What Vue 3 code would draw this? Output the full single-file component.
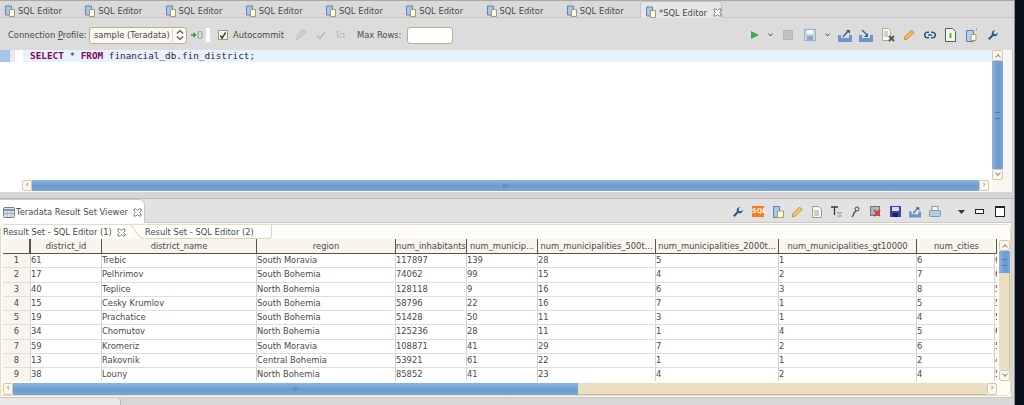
<script setup>
const tabs = Array.from({ length: 8 }, () => 'SQL Editor')
const columns = [
  { name: '', w: 28 },
  { name: 'district_id', w: 71 },
  { name: 'district_name', w: 155 },
  { name: 'region', w: 139 },
  { name: 'num_inhabitants', w: 71 },
  { name: 'num_municip...', w: 71 },
  { name: 'num_municipalities_500t...', w: 118 },
  { name: 'num_municipalities_2000t...', w: 123 },
  { name: 'num_municipalities_gt10000', w: 138 },
  { name: 'num_cities', w: 80 }
]
const rows = [
  [1, 61, 'Trebic', 'South Moravia', 117897, 139, 28, 5, 1, 6, '6'],
  [2, 17, 'Pelhrimov', 'South Bohemia', 74062, 99, 15, 4, 2, 7, '6'],
  [3, 40, 'Teplice', 'North Bohemia', 128118, 9, 16, 6, 3, 8, '5'],
  [4, 15, 'Cesky Krumlov', 'South Bohemia', 58796, 22, 16, 7, 1, 5, '5'],
  [5, 19, 'Prachatice', 'South Bohemia', 51428, 50, 11, 3, 1, 4, '5'],
  [6, 34, 'Chomutov', 'North Bohemia', 125236, 28, 11, 1, 4, 5, '6'],
  [7, 59, 'Kromeriz', 'South Moravia', 108871, 41, 29, 7, 2, 6, '5'],
  [8, 13, 'Rakovnik', 'Central Bohemia', 53921, 61, 22, 1, 1, 2, '4'],
  [9, 38, 'Louny', 'North Bohemia', 85852, 41, 23, 4, 2, 4, '5']
]
// The last visible data column leaves 2px for a sliver of the next, scrolled-off column.
const bodyWidth = (j) => (j === 9 ? 78 : columns[j].w) + 'px'
</script>

<template>
  <div class="screen">
    <div class="window">
      <div class="tabbar">
        <div v-for="(t, i) in tabs" :key="i" class="tab">
          <svg class="ic" viewBox="0 0 12 12"><path d="M1.500 1h6v9h-6z" fill="#a9c6e6" stroke="#5c86b4"/><path d="M5.500 4.500h5v7h-5z" fill="#fdfbe8" stroke="#a89a6a"/></svg>
          <span>{{ t }}</span>
        </div>
        <div class="tab active">
          <svg class="ic" viewBox="0 0 12 12"><path d="M1.500 1h6v9h-6z" fill="#a9c6e6" stroke="#5c86b4"/><path d="M5.500 4.500h5v7h-5z" fill="#fdfbe8" stroke="#a89a6a"/></svg>
          <span>*SQL Editor</span>
          <svg class="close" viewBox="0 0 9 9"><path d="M1 1h2l1.500 1.500L6 1h2v2L6.500 4.500 8 6v2H6L4.500 6.500 3 8H1V6l1.500-1.500L1 3z" fill="#fff" stroke="#666" stroke-width=".8"/></svg>
        </div>
      </div>

      <div class="toolbar">
        <label class="lbl first">Connection <u>P</u>rofile:</label>
        <div class="combo"><span>sample (Teradata)</span><i class="combo-sep"></i>
          <svg width="8" height="12" viewBox="0 0 8 12"><path d="M1 4.500 4 1.500 7 4.500M1 7.500 4 10.500 7 7.500" fill="none" stroke="#555" stroke-width="1.200"/></svg>
        </div>
        <svg class="plug" width="12" height="10" viewBox="0 0 12 10"><path d="M0 5h4" stroke="#4c8a4c" stroke-width="1.500"/><path d="M2.500 2v6l3-3z" fill="#3d8f3d"/><rect x="7" y="1.500" width="4" height="7" rx="1.500" fill="none" stroke="#8a9a8a"/></svg>
        <i class="white-sep"></i>
        <span class="check"><svg width="9" height="9" viewBox="0 0 9 9"><path d="M1.500 4.500 3.500 7.500 7.500 1" fill="none" stroke="#333" stroke-width="1.600"/></svg></span>
        <span class="lbl auto">Autocommit</span>
        <svg class="dis" width="14" height="14" viewBox="0 0 14 14"><path d="M2 12 4 6 9 1l3 3-5 5z" fill="#cfcfcf" stroke="#c4c4c4"/></svg>
        <svg class="dis chk" width="12" height="12" viewBox="0 0 12 12"><path d="M2 6.500 5 9.500 10 3" fill="none" stroke="#bdbdbd" stroke-width="1.800"/></svg>
        <svg class="dis und" width="10" height="10" viewBox="0 0 10 10"><path d="M3 1.500H1.500V7H8V3.500H4" fill="none" stroke="#bdbdbd" stroke-width="1.200"/></svg>
        <span class="lbl maxr">Max Rows:</span>
        <div class="txt"></div>

        <div class="tools">
          <svg class="t-play" width="10" height="10" viewBox="0 0 10 10"><path d="M1 1v8l8-4z" fill="#45a845"/></svg>
          <svg class="t-drop" width="5" height="4" viewBox="0 0 5 4"><path d="M.5 .5 2.500 3 4.500 .5" fill="none" stroke="#555"/></svg>
          <span class="t-stop"></span>
          <svg class="t-save" width="12" height="12" viewBox="0 0 12 12"><rect x=".5" y=".5" width="11" height="11" fill="#c5d3e6" stroke="#9db0c9"/><rect x="3" y="1" width="6" height="4" fill="#f3f6fa"/><rect x="3" y="7" width="6" height="4" fill="#8fa6c4"/></svg>
          <svg class="t-drop2" width="5" height="4" viewBox="0 0 5 4"><path d="M.5 .5 2.500 3 4.500 .5" fill="none" stroke="#555"/></svg>
          <svg class="t-ex" width="14" height="13" viewBox="0 0 14 13"><path d="M0 6h3v3h8V6h3v7H0z" fill="#6d97c8"/><path d="M5 8 10 2" stroke="#33629c" stroke-width="1.300"/><path d="M8 1h4v4z" fill="#33629c"/></svg>
          <svg class="t-im" width="14" height="13" viewBox="0 0 14 13"><path d="M0 6h3v3h8V6h3v7H0z" fill="#6d97c8"/><path d="M3 1 8 6" stroke="#33629c" stroke-width="1.300"/><path d="M5 8h4V4z" fill="#33629c"/></svg>
          <svg class="t-dx" width="13" height="14" viewBox="0 0 13 14"><path d="M.5 .5h6l2 2v10h-8z" fill="#fbf8ea" stroke="#b3a888"/><path d="M2 4h4M2 6h4M2 8h4" stroke="#8fa8c8"/><path d="M7 8 12 13M12 8 7 13" stroke="#555" stroke-width="2"/></svg>
          <svg class="t-pen" width="12" height="12" viewBox="0 0 12 12"><path d="M1 11 2 7.500 8.500 1 11 3.500 4.500 10z" fill="#f0b95a" stroke="#c98f3a"/></svg>
          <svg class="t-link" width="12" height="8" viewBox="0 0 12 8"><path d="M5 1.200H3.500a2.800 2.800 0 0 0 0 5.600H5M7 1.200h1.500a2.800 2.800 0 0 1 0 5.600H7M4 4h4" fill="none" stroke="#2c5d8f" stroke-width="1.600"/></svg>
          <svg class="t-doc" width="11" height="14" viewBox="0 0 11 14"><path d="M.5 .5h7l3 3v10H.5z" fill="#f3f8e8" stroke="#42685e"/><path d="M5.500 5v5" stroke="#6cae3c" stroke-width="2"/></svg>
          <svg class="t-doc2" width="13" height="14" viewBox="0 0 13 14"><path d="M.5 2.500h7v11h-7z" fill="#b9d0e8" stroke="#4e7fb0"/><path d="M5 6.500h5v6H5z" fill="#fdf9e6" stroke="#b09c5c"/><path d="M10.500 0v3" stroke="#d3a83c"/></svg>
          <svg class="t-wr" width="12" height="12" viewBox="0 0 12 12"><path d="M7.500 1.200a3.200 3.200 0 0 0-2.600 4.400L1 9.500 2.500 11l3.900-3.900a3.200 3.200 0 0 0 4.400-2.600L11 3.500 9.200 5.300 7 5 6.700 2.800 8.500 1z" fill="#2c5d8f"/></svg>
        </div>
      </div>

      <div class="editor">
        <div class="editor-main">
          <div class="ed-body">
            <div class="gutter"><i class="mark"></i></div>
            <div class="lav"></div>
            <div class="margin"></div>
            <div class="code-area">
              <div class="code-line"><b>SELECT</b> * <b>FROM</b> financial_db.fin_district;</div>
            </div>
          </div>
          <div class="ed-hbar-row">
            <div class="hbar">
              <span class="sb-btn">‹</span>
              <div class="sb-thumb full"><i class="grip">III</i></div>
              <span class="sb-btn">›</span>
            </div>
          </div>
        </div>
        <div class="vbar ed-vbar">
          <span class="vb-btn up"></span>
          <div class="vb-thumb"><i class="vgrip"></i></div>
          <span class="vb-btn down"></span>
        </div>
      </div>

      <div class="sash"></div>

      <div class="view">
        <div class="view-head">
          <div class="view-tab">
            <svg class="ic2" viewBox="0 0 12 11"><rect x=".5" y=".5" width="11" height="10" rx="1" fill="#dfe6ee" stroke="#6f7f90"/><path d="M.5 3h11" stroke="#6f7f90" stroke-width="1.600"/><path d="M4 3v7M8 3v7M1 6.500h10" stroke="#9fb0c2"/></svg>
            <span>Teradata Result Set Viewer</span>
            <svg class="close" viewBox="0 0 9 9"><path d="M1 1h2l1.500 1.500L6 1h2v2L6.500 4.500 8 6v2H6L4.500 6.500 3 8H1V6l1.500-1.500L1 3z" fill="#fff" stroke="#666" stroke-width=".8"/></svg>
          </div>
          <div class="view-tools">
            <svg class="v1" width="12" height="12" viewBox="0 0 12 12"><path d="M7.500 1.200a3.200 3.200 0 0 0-2.600 4.400L1 9.500 2.500 11l3.900-3.900a3.200 3.200 0 0 0 4.400-2.600L11 3.500 9.200 5.300 7 5 6.700 2.800 8.500 1z" fill="#2c5d8f"/></svg>
            <span class="sql">SQL</span>
            <svg class="v3" width="11" height="12" viewBox="0 0 11 12"><path d="M.5 .5h6v11h-6z" fill="#a9c6e6" stroke="#5c86b4"/><path d="M4.500 5h6v6.500h-6z" fill="#fdf9e6" stroke="#b09c5c"/></svg>
            <svg class="v4" width="12" height="12" viewBox="0 0 12 12"><path d="M1 11 2 7.500 8.500 1 11 3.500 4.500 10z" fill="#f0c66a" stroke="#c98f3a"/></svg>
            <svg class="v5" width="10" height="12" viewBox="0 0 10 12"><path d="M.5 .5h6l3 3v8h-9z" fill="#fbf8ea" stroke="#9c9c8a"/><path d="M2 5h5M2 7h5M2 9h5" stroke="#8fa8c8"/></svg>
            <svg class="v6" width="11" height="11" viewBox="0 0 11 11"><path d="M0 1h7M3.500 1v8" stroke="#2b3e50" stroke-width="1.300" fill="none"/><path d="M6 7h5M6 10h5" stroke="#7b8b9b"/></svg>
            <svg class="v7" width="9" height="12" viewBox="0 0 9 12"><circle cx="6" cy="3" r="2" fill="none" stroke="#445"/><path d="M5 5 2 8M3 8 1 11" stroke="#445" stroke-width="1.300"/></svg>
            <svg class="v8" width="11" height="11" viewBox="0 0 11 11"><rect x=".5" y=".5" width="9" height="9" fill="#aeb6c4" stroke="#6a7280"/><path d="M4 4 10 10M10 4 4 10" stroke="#d83a3a" stroke-width="1.800"/></svg>
            <svg class="v9" width="11" height="11" viewBox="0 0 11 11"><rect width="11" height="11" fill="#3b42a8"/><rect x="2" y="1" width="7" height="4" fill="#d9dcf5"/><rect x="3" y="7" width="5" height="4" fill="#1c2068"/></svg>
            <svg class="v10" width="12" height="12" viewBox="0 0 14 13"><path d="M0 6h3v3h8V6h3v7H0z" fill="#6d97c8"/><path d="M5 8 10 2" stroke="#33629c" stroke-width="1.300"/><path d="M8 1h4v4z" fill="#33629c"/></svg>
            <svg class="v11" width="12" height="11" viewBox="0 0 12 11"><rect x="3" y=".5" width="6" height="4" fill="#f4f6f8" stroke="#8a9bb0"/><rect x=".5" y="4.500" width="11" height="6" rx="1" fill="#b7cbe2" stroke="#7d96b3"/></svg>
            <svg class="v12" width="7" height="4" viewBox="0 0 7 4"><path d="M0 0h7L3.500 4z" fill="#333"/></svg>
            <span class="min"></span>
            <span class="max"></span>
          </div>
        </div>

        <div class="folder">
          <div class="inner-tabs">
            <div class="itab on">
              <span>Result Set - SQL Editor (1)</span>
              <svg class="close" viewBox="0 0 9 9"><path d="M1 1h2l1.500 1.500L6 1h2v2L6.500 4.500 8 6v2H6L4.500 6.500 3 8H1V6l1.500-1.500L1 3z" fill="#fff" stroke="#666" stroke-width=".8"/></svg>
            </div>
            <svg class="curve" width="15" height="14" viewBox="0 0 16 14" preserveAspectRatio="none"><path d="M0 0C5 1 6 12 15 13.500" fill="none" stroke="#d9c9a2"/></svg>
            <div class="itab off">Result Set - SQL Editor (2)</div>
          </div>

          <div class="grid-wrap">
            <div class="grid-col">
              <div class="grid">
                <div class="grow ghead">
                  <div v-for="(c, i) in columns" :key="i" class="hc" :style="{ width: c.w + 'px' }">{{ c.name }}</div>
                </div>
                <div v-for="r in rows" :key="r[0]" class="grow gbody">
                  <div v-for="(v, j) in r.slice(0, 10)" :key="j" class="bc" :class="{ idx: j === 0 }" :style="{ width: bodyWidth(j) }">{{ v }}</div>
                  <div class="bc rest">{{ r[10] }}</div>
                </div>
              </div>
              <div class="hbar tbl-bar">
                <span class="sb-btn">‹</span>
                <div class="sb-thumb part"><i class="grip">III</i></div>
                <div class="sb-track"></div>
                <span class="sb-btn">›</span>
              </div>
            </div>
            <div class="vbar tbl-vbar">
              <span class="vb-btn up"></span>
              <div class="vb-thumb short"><i class="vgrip"></i></div>
              <div class="vb-track"></div>
              <span class="vb-btn down"></span>
            </div>
          </div>
        </div>
      </div>

      <div class="footer"><i class="foot-tab"></i></div>
    </div>
  </div>
</template>

<style scoped>
.screen { width: 1024px; height: 405px; background: #0a0f1c; overflow: hidden; font: 8.35px/1 "DejaVu Sans", sans-serif; color: #4a4a4a; }
.window { width: 1015px; height: 405px; background: #dcdcdc; display: flex; flex-direction: column; border-right: 1px solid #8f8f8f; box-sizing: border-box; }

.tabbar { height: 18px; flex: none; display: flex; background: #d9d9d9; border-top: 1px solid #a8a8a8; box-sizing: border-box; border-bottom: 1px solid #c8c8c8; }
.tab { width: 80.25px; flex: none; display: flex; align-items: center; padding: 3px 0 0 4px; box-sizing: border-box; gap: 1px; white-space: nowrap; }
.tab span { margin: 2px 0 0 1px; }
.tab.active { width: 82px; margin-left: -2px; padding-left: 4px; background: #e6e6e6; border: 1px solid #c4c4c4; border-bottom: 0; border-radius: 4px 4px 0 0; height: 18px; }
.ic { width: 12px; height: 12px; flex: none; }
.close { width: 9px; height: 9px; flex: none; margin-left: 5px; }

.toolbar { height: 32px; flex: none; display: flex; align-items: center; background: #dcdcdc; padding-top: 2px; box-sizing: border-box; }
.lbl { white-space: nowrap; }
.first { margin-left: 8px; width: 81px; }
.combo { width: 98px; height: 17px; box-sizing: border-box; border: 1px solid #c0ae87; border-radius: 3px; background: #faf8f2; display: flex; align-items: center; padding-left: 4px; white-space: nowrap; }
.combo span { width: 78px; }
.combo-sep { width: 1px; height: 13px; background: #dcd5c4; margin: 0 3px 0 0; }
.plug { margin-left: 4px; }
.white-sep { width: 4px; height: 14px; background: #fff; margin-left: 3px; }
.check { border: 1px solid #a7966c; background: #fdfcf6; margin-left: 8px; display: flex; align-items: center; justify-content: center; width: 8px; height: 8px; }
.auto { margin-left: 5px; width: 52px; }
.dis { margin-left: 9px; }
.dis.chk { margin-left: 7px; }
.dis.und { margin-left: 9px; }
.maxr { margin-left: 11px; width: 50px; }
.txt { width: 46px; height: 17px; background: #fff; border: 1px solid #c0ae87; border-radius: 3px; box-sizing: border-box; }
.tools { display: flex; align-items: center; margin-left: 297px; }
.t-drop { margin-left: 8px; }
.t-stop { width: 10px; height: 10px; box-sizing: border-box; background: #c2c2c2; border: 1px solid #b5b5b5; border-radius: 1px; margin-left: 10px; }
.t-save { margin-left: 11px; }
.t-drop2 { margin-left: 9px; }
.t-ex { margin-left: 8px; }
.t-im { margin-left: 7px; }
.t-dx { margin-left: 9px; }
.t-pen { margin-left: 8px; }
.t-link { margin-left: 9px; }
.t-doc { margin-left: 9px; }
.t-doc2 { margin-left: 10px; }
.t-wr { margin-left: 8px; }

.editor { height: 142px; flex: none; display: flex; background: #f8f6f1; border-right: 1px solid #c8c8c8; margin-right: 1px; }
.editor-main { width: 992px; flex: none; display: flex; flex-direction: column; background: #fff; }
.ed-body { flex: 1; display: flex; }
.gutter { width: 10px; background: #fff; }
.mark { display: block; width: 10px; height: 12px; background: #a9c6e8; }
.lav { width: 5px; height: 12px; background: #efe2f2; }
.margin { width: 8px; }
.code-area { flex: 1; }
.code-line { height: 12px; background: #e8f2fe; padding-left: 7px; font: 9.35px/12px "DejaVu Sans Mono", monospace; color: #2a2a2a; white-space: pre; }
.code-line b { color: #7f0a55; font-weight: bold; }
.ed-hbar-row { padding: 0 3px 0 22px; height: 12px; flex: none; }

.hbar { display: flex; height: 11px; }
.sb-btn { width: 10px; height: 11px; box-sizing: border-box; border: 1px solid #d8c9a6; border-radius: 2px; background: #faf7ee; font-size: 8px; line-height: 8px; text-align: center; color: #777; flex: none; }
.sb-thumb { background: linear-gradient(#8db4de, #6c9bd0 55%, #7aa6d8); display: flex; align-items: center; justify-content: center; }
.sb-thumb.full { flex: 1; }
.sb-thumb.part { width: 565px; flex: none; }
.sb-track { flex: 1; background: #ebdfc3; border-bottom: 1px solid #cbbb92; }
.grip { font: normal 6px/1 "DejaVu Sans", sans-serif; color: #4d78aa; }

.vbar { width: 11px; flex: none; display: flex; flex-direction: column; }
.ed-vbar { height: 130px; }
.vb-btn { height: 11px; flex: none; box-sizing: border-box; border: 1px solid #d8c9a6; border-radius: 2px; background: #faf7ee; position: relative; }
.vb-btn::after { content: ""; position: absolute; left: 3px; width: 3px; height: 3px; border: solid #8c8c8c; border-width: 1px 0 0 1px; transform: rotate(45deg); top: 4px; }
.vb-btn.down::after { transform: rotate(225deg); top: 1px; }
.vb-thumb { flex: 1; background: linear-gradient(90deg, #8db4de, #6c9bd0 55%, #7aa6d8); display: flex; align-items: center; justify-content: center; }
.vb-thumb.short { flex: none; height: 22px; }
.vb-track { flex: 1; background: #ebdfc3; border-right: 1px solid #d3c49c; }
.vgrip { width: 5px; height: 5px; border-top: 1px solid #4d78aa; border-bottom: 1px solid #4d78aa; }

.sash { height: 7px; flex: none; background: #d6d6d6; border-bottom: 1px solid #b8b8b8; box-sizing: border-box; }

.view { height: 198px; flex: none; display: flex; flex-direction: column; background: #fcfaf5; margin-right: 2px; border-right: 1px solid #cfcfcf; }
.view-head { height: 24px; flex: none; display: flex; background: #e2e2e2; border-bottom: 1px solid #c9c9c9; box-sizing: border-box; }
.view-tab { width: 145px; height: 24px; box-sizing: border-box; background: #fff; border: 1px solid #c9c9c9; border-left: 0; border-bottom: 0; border-radius: 0 6px 0 0; display: flex; align-items: center; padding: 2px 0 0 3px; white-space: nowrap; flex: none; }
.ic2 { width: 12px; height: 11px; margin-right: 1px; flex: none; }
.view-tools { display: flex; align-items: center; padding: 2px 0 0 587px; }
.sql { width: 12px; height: 11px; background: #ff7a14; color: #fff; font-size: 6.5px; font-weight: bold; line-height: 11px; text-align: center; margin-left: 8px; }
.v3 { margin-left: 9px; }
.v4 { margin-left: 7px; }
.v5 { margin-left: 9px; }
.v6 { margin-left: 9px; }
.v7 { margin-left: 9px; }
.v8 { margin-left: 10px; }
.v9 { margin-left: 9px; }
.v10 { margin-left: 8px; }
.v11 { margin-left: 8px; }
.v12 { margin-left: 17px; }
.min { width: 7px; height: 3px; border: 1px solid #222; background: #fff; margin-left: 10px; }
.max { width: 8px; height: 8px; border: 1px solid #222; border-top-width: 2px; background: #fff; margin-left: 11px; }

.folder { flex: 1; display: flex; flex-direction: column; background: #fdfcf8; margin: 1px 0 1px 0; border: 1px solid #e8dcc0; border-radius: 5px 6px 6px 0; }
.inner-tabs { height: 14px; flex: none; display: flex; align-items: stretch; white-space: nowrap; }
.itab { display: flex; align-items: center; }
.itab.on { width: 129px; padding: 1px 0 0 2px; box-sizing: border-box; background: #fff; }
.itab.on .close { margin-left: 5px; }
.curve { flex: none; }
.itab.off { width: 127px; padding-top: 1px; box-sizing: border-box; border: solid #e3d6b6; border-width: 0 1px 1px 0; border-radius: 0 0 4px 0; height: 14px; background: #fff; }

.grid-wrap { flex: 1; display: flex; padding-left: 2px; }
.grid-col { width: 994px; flex: none; }
.grid { height: 142px; overflow: hidden; background: #fff; }
.grow { display: flex; }
.ghead { height: 14px; background: #f8f5ec; border-bottom: 1px solid #5a5346; }
.hc { flex: none; box-sizing: border-box; border-right: 1px solid #5a5346; text-align: center; line-height: 15px; white-space: nowrap; }
.hc:first-child { border-right-width: 2px; }
.gbody { height: 14.25px; border-bottom: 1px solid #dedede; box-sizing: border-box; }
.bc { flex: none; box-sizing: border-box; border-right: 1px solid #d2d2d2; line-height: 13.5px; white-space: nowrap; }
.bc.idx { background: #f8f5ec; text-align: center; }
.bc.rest { flex: 1; border-right: 0; overflow: hidden; min-width: 0; }
.tbl-bar { margin-top: 2px; height: 12px; }
.tbl-bar .sb-btn { height: 12px; }
.tbl-vbar { margin: 1px 0 0 2px; height: 141px; }

.footer { flex: 1; background: #d8d8d8; border-top: 1px solid #c6c6c6; }
.foot-tab { display: block; width: 120px; height: 8px; background: #e8e8e8; border-right: 1px solid #b8b8b8; border-radius: 0 4px 0 0; }
</style>
